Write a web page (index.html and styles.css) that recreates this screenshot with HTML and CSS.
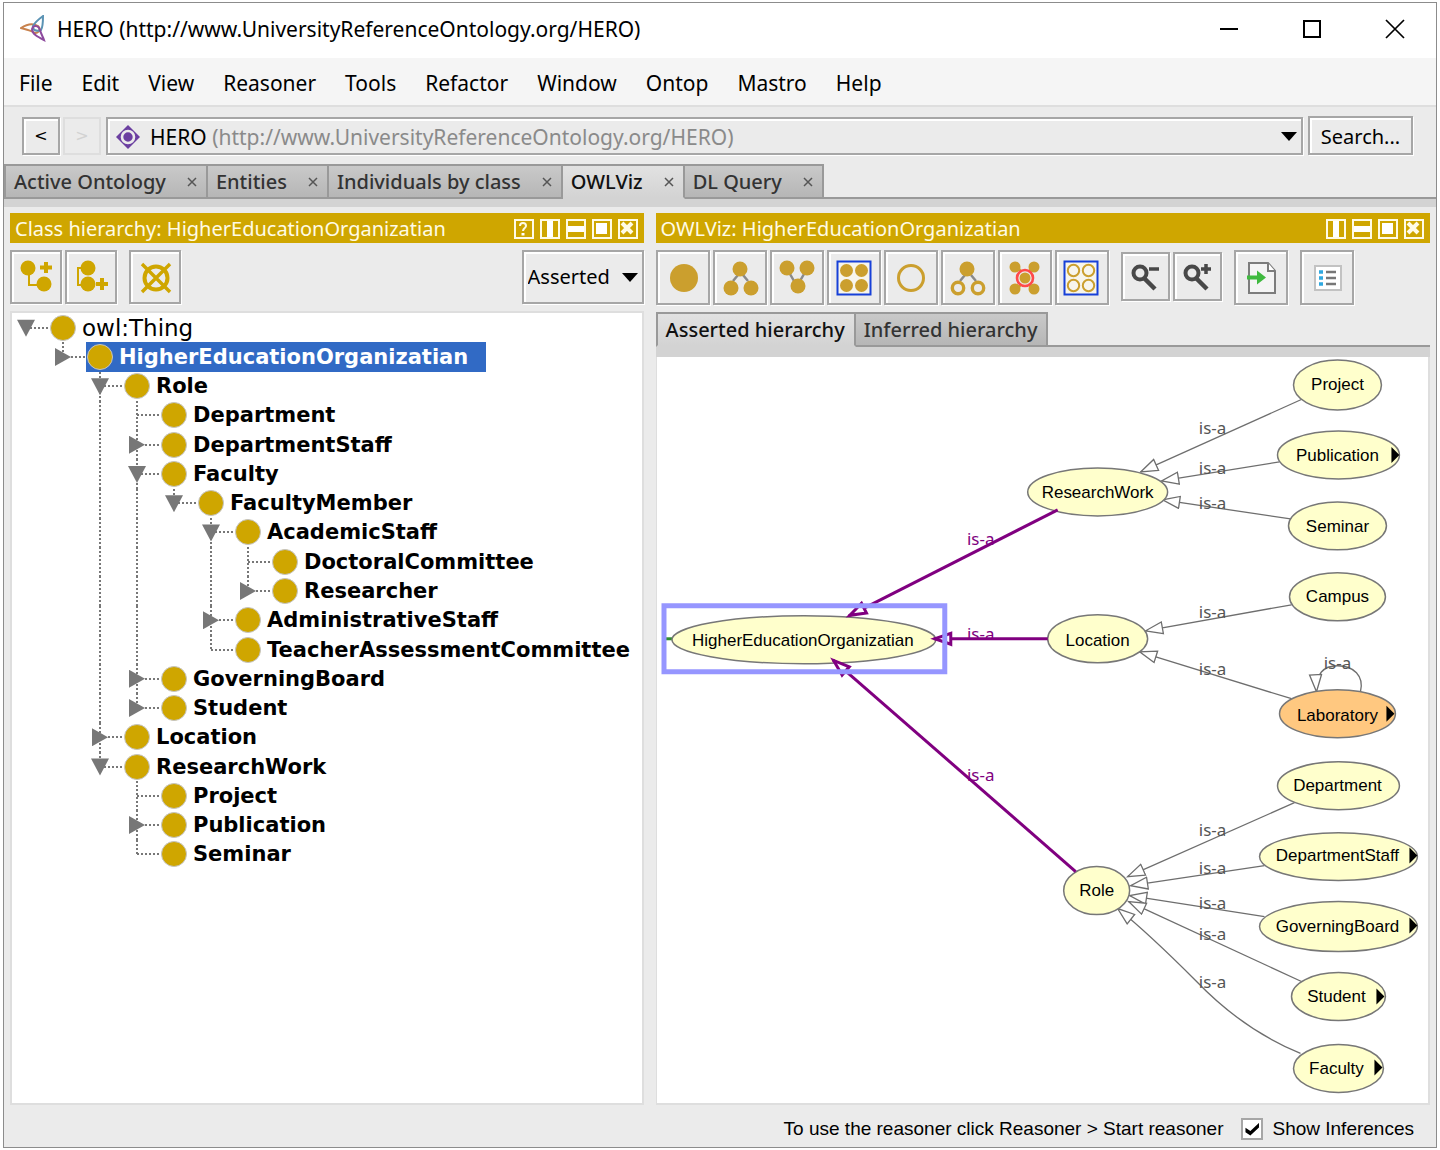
FILE: index.html
```html
<!DOCTYPE html>
<html lang="en">
<head>
<meta charset="utf-8">
<meta name="viewport" content="width=device-width, initial-scale=1">
<title>HERO (http://www.UniversityReferenceOntology.org/HERO)</title>
<link rel="stylesheet" href="styles.css">
</head>
<body>
<div class="window">
  <header class="titlebar">
    <svg class="app-icon" width="26" height="28" viewBox="0 0 26 28" fill="none" stroke-width="2">
      <path d="M1 13C7 9 13 8 18 11C22 15 17 20 13 17C10 15 5 14 1 13Z" stroke="#c8824e"/>
      <path d="M23 1C23 7 23 12 21 15C17 17 12 15 13 11C15 7 19 4 23 1Z" stroke="#5b93b4"/>
      <path d="M24 25C18 22 12 19 12 14C14 9 19 11 20 15C21 19 23 22 24 25Z" stroke="#8d4a9e"/>
    </svg>
    <h1 class="title">HERO (http://www.UniversityReferenceOntology.org/HERO)</h1>
    <div class="window-controls">
      <button type="button" aria-label="Minimize"><svg width="20" height="20" viewBox="0 0 20 20"><path d="M1 10H19" stroke="#000" stroke-width="2"/></svg></button>
      <button type="button" aria-label="Maximize"><svg width="20" height="20" viewBox="0 0 20 20"><path d="M2 2H18V18H2Z" fill="none" stroke="#000" stroke-width="2"/></svg></button>
      <button type="button" aria-label="Close"><svg width="20" height="20" viewBox="0 0 20 20"><path d="M1 1L19 19M19 1L1 19" stroke="#000" stroke-width="1.7"/></svg></button>
    </div>
  </header>

  <nav class="menubar" aria-label="Main menu">
    <button type="button">File</button>
    <button type="button">Edit</button>
    <button type="button">View</button>
    <button type="button">Reasoner</button>
    <button type="button">Tools</button>
    <button type="button">Refactor</button>
    <button type="button">Window</button>
    <button type="button">Ontop</button>
    <button type="button">Mastro</button>
    <button type="button">Help</button>
  </nav>

  <div class="locationbar">
    <button type="button" class="bevel nav-button" aria-label="Back">&lt;</button>
    <button type="button" class="nav-button nav-off" aria-label="Forward" disabled>&gt;</button>
    <button type="button" class="bevel ontology-picker" aria-haspopup="listbox">
      <svg width="26" height="26" viewBox="0 0 26 26"><path d="M13 1L25 13L13 25L1 13Z" fill="#6b3fa0"/><circle cx="13" cy="13" r="6" fill="none" stroke="#ebebeb" stroke-width="2.600"/></svg>
      <span>HERO <span class="iri">(http://www.UniversityReferenceOntology.org/HERO)</span></span>
      <svg class="caret" width="16" height="9" viewBox="0 0 16 9"><path d="M0 0H16L8 9Z"/></svg>
    </button>
    <button type="button" class="bevel search-button">Search...</button>
  </div>

  <div class="tabs main-tabs" role="tablist">
    <div class="tab"><button type="button" role="tab" aria-selected="false">Active Ontology</button><button type="button" class="tab-close" aria-label="Close Active Ontology"><svg width="10" height="10" viewBox="0 0 10 10"><path d="M1 1L9 9M9 1L1 9"/></svg></button></div>
    <div class="tab"><button type="button" role="tab" aria-selected="false">Entities</button><button type="button" class="tab-close" aria-label="Close Entities"><svg width="10" height="10" viewBox="0 0 10 10"><path d="M1 1L9 9M9 1L1 9"/></svg></button></div>
    <div class="tab"><button type="button" role="tab" aria-selected="false">Individuals by class</button><button type="button" class="tab-close" aria-label="Close Individuals by class"><svg width="10" height="10" viewBox="0 0 10 10"><path d="M1 1L9 9M9 1L1 9"/></svg></button></div>
    <div class="tab active"><button type="button" role="tab" aria-selected="true">OWLViz</button><button type="button" class="tab-close" aria-label="Close OWLViz"><svg width="10" height="10" viewBox="0 0 10 10"><path d="M1 1L9 9M9 1L1 9"/></svg></button></div>
    <div class="tab"><button type="button" role="tab" aria-selected="false">DL Query</button><button type="button" class="tab-close" aria-label="Close DL Query"><svg width="10" height="10" viewBox="0 0 10 10"><path d="M1 1L9 9M9 1L1 9"/></svg></button></div>
  </div>

  <main class="panels">
    <section class="panel">
      <header class="panel-header">
        <h2>Class hierarchy: HigherEducationOrganizatian</h2>
        <div class="panel-controls">
          <button type="button" aria-label="Help"><svg width="20" height="20" viewBox="0 0 20 20"><path d="M1 1H19V19H1Z"/><path d="M6 7C6 3 12 3 12 7C12 9 9 9 9 12" stroke-width="3"/><path d="M7.500 14H10.500V16.500H7.500Z" class="solid"/></svg></button>
          <button type="button" aria-label="Split vertically"><svg width="20" height="20" viewBox="0 0 20 20"><path d="M1 1H19V19H1Z"/><path d="M7 2H13V18H7Z" class="solid"/></svg></button>
          <button type="button" aria-label="Split horizontally"><svg width="20" height="20" viewBox="0 0 20 20"><path d="M1 1H19V19H1Z"/><path d="M2 7H18V13H2Z" class="solid"/></svg></button>
          <button type="button" aria-label="Float"><svg width="20" height="20" viewBox="0 0 20 20"><path d="M1 1H19V19H1Z"/><path d="M4 4H15V15H4Z" class="solid"/></svg></button>
          <button type="button" aria-label="Close panel"><svg width="20" height="20" viewBox="0 0 20 20"><path d="M1 1H19V19H1Z"/><path class="cross" d="M4 4L14 14M14 4L4 14"/></svg></button>
        </div>
      </header>
      <div class="toolbar">
        <button type="button" class="bevel tool" aria-label="Add subclass"><svg width="40" height="40" viewBox="1 1 40 40"><path d="M14 16V29H26" fill="none" stroke="#cfa600" stroke-width="2"/><circle cx="13" cy="12" r="7.500" fill="#cfa600"/><circle cx="29" cy="28" r="7.500" fill="#cfa600"/><path d="M31 6V17M25 11.500H37" stroke="#cfa600" stroke-width="4"/></svg></button>
        <button type="button" class="bevel tool" aria-label="Add sibling class"><svg width="40" height="40" viewBox="1 1 40 40"><path d="M14 12H8V29H14" fill="none" stroke="#cfa600" stroke-width="2"/><circle cx="18" cy="12" r="7.500" fill="#cfa600"/><circle cx="18" cy="28" r="7.500" fill="#cfa600"/><path d="M32 22V34M26 28H38" stroke="#cfa600" stroke-width="4"/></svg></button>
        <button type="button" class="bevel tool group-start" aria-label="Delete class"><svg width="40" height="40" viewBox="0 0 40 40" fill="none" stroke="#cfa600" stroke-width="4"><circle cx="21" cy="21" r="11.500"/><path d="M7 7L35 35M35 7L7 35" stroke-width="3.400"/></svg></button>
        <span class="view-picker">
          <select class="bevel" aria-label="Hierarchy view"><option>Asserted</option><option>Inferred</option></select>
          <svg class="caret" width="16" height="9" viewBox="0 0 16 9"><path d="M0 0H16L8 9Z"/></svg>
        </span>
      </div>
      <div class="tree-view">
        <ul class="tree" role="tree">
          <li role="treeitem"><i class="stub"><button type="button" class="toggle open" aria-label="Collapse"></button></i><span class="entry plain"><b class="dot"></b>owl:Thing</span></li>
          <li role="treeitem" aria-selected="true"><i></i><i class="end"><button type="button" class="toggle" aria-label="Expand"></button></i><span class="entry selected"><b class="dot"></b>HigherEducationOrganizatian</span></li>
          <li role="treeitem"><i></i><i></i><i class="tee"><button type="button" class="toggle open" aria-label="Collapse"></button></i><span class="entry"><b class="dot"></b>Role</span></li>
          <li role="treeitem"><i></i><i></i><i class="line"></i><i class="tee"></i><span class="entry"><b class="dot"></b>Department</span></li>
          <li role="treeitem"><i></i><i></i><i class="line"></i><i class="tee"><button type="button" class="toggle" aria-label="Expand"></button></i><span class="entry"><b class="dot"></b>DepartmentStaff</span></li>
          <li role="treeitem"><i></i><i></i><i class="line"></i><i class="tee"><button type="button" class="toggle open" aria-label="Collapse"></button></i><span class="entry"><b class="dot"></b>Faculty</span></li>
          <li role="treeitem"><i></i><i></i><i class="line"></i><i class="line"></i><i class="end"><button type="button" class="toggle open" aria-label="Collapse"></button></i><span class="entry"><b class="dot"></b>FacultyMember</span></li>
          <li role="treeitem"><i></i><i></i><i class="line"></i><i class="line"></i><i></i><i class="tee"><button type="button" class="toggle open" aria-label="Collapse"></button></i><span class="entry"><b class="dot"></b>AcademicStaff</span></li>
          <li role="treeitem"><i></i><i></i><i class="line"></i><i class="line"></i><i></i><i class="line"></i><i class="tee"></i><span class="entry"><b class="dot"></b>DoctoralCommittee</span></li>
          <li role="treeitem"><i></i><i></i><i class="line"></i><i class="line"></i><i></i><i class="line"></i><i class="end"><button type="button" class="toggle" aria-label="Expand"></button></i><span class="entry"><b class="dot"></b>Researcher</span></li>
          <li role="treeitem"><i></i><i></i><i class="line"></i><i class="line"></i><i></i><i class="tee"><button type="button" class="toggle" aria-label="Expand"></button></i><span class="entry"><b class="dot"></b>AdministrativeStaff</span></li>
          <li role="treeitem"><i></i><i></i><i class="line"></i><i class="line"></i><i></i><i class="end"></i><span class="entry"><b class="dot"></b>TeacherAssessmentCommittee</span></li>
          <li role="treeitem"><i></i><i></i><i class="line"></i><i class="tee"><button type="button" class="toggle" aria-label="Expand"></button></i><span class="entry"><b class="dot"></b>GoverningBoard</span></li>
          <li role="treeitem"><i></i><i></i><i class="line"></i><i class="end"><button type="button" class="toggle" aria-label="Expand"></button></i><span class="entry"><b class="dot"></b>Student</span></li>
          <li role="treeitem"><i></i><i></i><i class="tee"><button type="button" class="toggle" aria-label="Expand"></button></i><span class="entry"><b class="dot"></b>Location</span></li>
          <li role="treeitem"><i></i><i></i><i class="end"><button type="button" class="toggle open" aria-label="Collapse"></button></i><span class="entry"><b class="dot"></b>ResearchWork</span></li>
          <li role="treeitem"><i></i><i></i><i></i><i class="tee"></i><span class="entry"><b class="dot"></b>Project</span></li>
          <li role="treeitem"><i></i><i></i><i></i><i class="tee"><button type="button" class="toggle" aria-label="Expand"></button></i><span class="entry"><b class="dot"></b>Publication</span></li>
          <li role="treeitem"><i></i><i></i><i></i><i class="end"></i><span class="entry"><b class="dot"></b>Seminar</span></li>
        </ul>
      </div>
    </section>

    <section class="panel">
      <header class="panel-header">
        <h2>OWLViz: HigherEducationOrganizatian</h2>
        <div class="panel-controls">
          <button type="button" aria-label="Split vertically"><svg width="20" height="20" viewBox="0 0 20 20"><path d="M1 1H19V19H1Z"/><path d="M7 2H13V18H7Z" class="solid"/></svg></button>
          <button type="button" aria-label="Split horizontally"><svg width="20" height="20" viewBox="0 0 20 20"><path d="M1 1H19V19H1Z"/><path d="M2 7H18V13H2Z" class="solid"/></svg></button>
          <button type="button" aria-label="Float"><svg width="20" height="20" viewBox="0 0 20 20"><path d="M1 1H19V19H1Z"/><path d="M4 4H15V15H4Z" class="solid"/></svg></button>
          <button type="button" aria-label="Close panel"><svg width="20" height="20" viewBox="0 0 20 20"><path d="M1 1H19V19H1Z"/><path class="cross" d="M4 4L14 14M14 4L4 14"/></svg></button>
        </div>
      </header>
      <div class="toolbar viz-toolbar">
        <button type="button" class="bevel tool" aria-label="Show class"><svg width="40" height="40" viewBox="0 0 40 40"><circle cx="21" cy="20" r="14" fill="#cb9f2e"/></svg></button>
        <button type="button" class="bevel tool" aria-label="Show subclasses"><svg width="40" height="40" viewBox="0 0 40 40"><path d="M18 17L13 23M23 17L28 23" stroke="#8a8a8a" stroke-width="2.500"/><g fill="#cb9f2e"><circle cx="20" cy="11" r="7.500"/><circle cx="11" cy="30" r="7.500"/><circle cx="31" cy="30" r="7.500"/></g></svg></button>
        <button type="button" class="bevel tool" aria-label="Show superclasses"><svg width="40" height="40" viewBox="0 0 40 40"><path d="M13 16L17 23M27 16L23 23" stroke="#8a8a8a" stroke-width="2.500"/><g fill="#cb9f2e"><circle cx="10" cy="10" r="7.500"/><circle cx="30" cy="10" r="7.500"/><circle cx="21" cy="28" r="7.500"/></g></svg></button>
        <button type="button" class="bevel tool" aria-label="Show all classes"><svg width="40" height="40" viewBox="0 0 40 40"><path d="M3.500 3.500H36.500V36.500H3.500Z" fill="#f7f5ec" stroke="#1740d8" stroke-width="2"/><g fill="#cb9f2e"><circle cx="12.500" cy="12.500" r="6.500"/><circle cx="27.500" cy="12.500" r="6.500"/><circle cx="12.500" cy="27.500" r="6.500"/><circle cx="27.500" cy="27.500" r="6.500"/></g></svg></button>
        <button type="button" class="bevel tool" aria-label="Hide class"><svg width="40" height="40" viewBox="0 0 40 40"><circle cx="20" cy="20" r="12.500" fill="none" stroke="#cb9f2e" stroke-width="3"/></svg></button>
        <button type="button" class="bevel tool" aria-label="Hide subclasses"><svg width="40" height="40" viewBox="0 0 40 40"><path d="M17 17L12 23M23 17L28 23" stroke="#8a8a8a" stroke-width="2.500"/><circle cx="19" cy="11" r="7.500" fill="#cb9f2e"/><g fill="none" stroke="#cb9f2e" stroke-width="3.400"><circle cx="10" cy="30" r="5.700"/><circle cx="30" cy="30" r="5.700"/></g></svg></button>
        <button type="button" class="bevel tool" aria-label="Hide classes past radius"><svg width="40" height="40" viewBox="0 0 40 40"><g fill="#cb9f2e"><circle cx="10" cy="9" r="5.500"/><circle cx="29" cy="9" r="5.500"/><circle cx="10" cy="31" r="5.500"/><circle cx="29" cy="31" r="5.500"/><path d="M12 8L28 32M28 8L12 32" stroke="#cb9f2e" stroke-width="2.500"/></g><circle cx="20" cy="20" r="8" fill="#ebebeb" stroke="#ff4a4a" stroke-width="2.600"/><circle cx="20" cy="20" r="5.500" fill="#cb9f2e"/></svg></button>
        <button type="button" class="bevel tool" aria-label="Hide all classes"><svg width="40" height="40" viewBox="1 0 40 40"><path d="M3.500 3.500H36.500V36.500H3.500Z" fill="#f7f5ec" stroke="#1740d8" stroke-width="2"/><g fill="none" stroke="#cb9f2e" stroke-width="2"><circle cx="12.500" cy="12.500" r="5.700"/><circle cx="27.500" cy="12.500" r="5.700"/><circle cx="12.500" cy="27.500" r="5.700"/><circle cx="27.500" cy="27.500" r="5.700"/></g></svg></button>
        <button type="button" class="bevel tool small group-start" aria-label="Zoom out"><svg width="34" height="34" viewBox="0 1 34 34" fill="none" stroke="#484848"><circle cx="12" cy="14" r="6.500" stroke-width="4"/><path d="M16 19L27 30" stroke-width="4.500"/><path d="M21 10H31" stroke-width="3.500"/></svg></button>
        <button type="button" class="bevel tool small" aria-label="Zoom in"><svg width="34" height="34" viewBox="0 1 34 34" fill="none" stroke="#484848"><circle cx="12" cy="14" r="6.500" stroke-width="4"/><path d="M16 19L27 30" stroke-width="4.500"/><path d="M21 10H31M26 5V15" stroke-width="3.500"/></svg></button>
        <button type="button" class="bevel tool group-start" aria-label="Export image"><svg width="40" height="40" viewBox="0 0 40 40"><path d="M8 5H27L34 13V35H8Z" fill="#f4f4f4" stroke="#7c7c7c" stroke-width="2"/><path d="M27 5V13H34" fill="#fff" stroke="#7c7c7c" stroke-width="2"/><path d="M6 17.500H16V12.500L25 19.500L16 26.500V21.500H6Z" fill="#3fb93f"/></svg></button>
        <button type="button" class="bevel tool group-start" aria-label="Options"><svg width="40" height="40" viewBox="0 0 40 40"><path d="M8 8H34V32H8Z" fill="#fff" stroke="#c2c2c2" stroke-width="2"/><path d="M12 14H16M12 20H16M12 26H16" stroke="#2fa8e0" stroke-width="3.500"/><path d="M19 14H29M19 20H29M19 26H29" stroke="#777" stroke-width="2.500"/></svg></button>
      </div>
      <div class="tabs viz-tabs" role="tablist">
        <div class="tab active"><button type="button" role="tab" aria-selected="true">Asserted hierarchy</button></div>
        <div class="tab"><button type="button" role="tab" aria-selected="false">Inferred hierarchy</button></div>
      </div>
      <div class="graph-view">
        <svg class="graph" viewBox="657 357 772 746" role="img" aria-label="Asserted class graph">
          <defs>
            <marker id="arrow" markerUnits="userSpaceOnUse" markerWidth="22" markerHeight="16" refX="18" refY="7" orient="auto"><path d="M1 1L18 7L1 13Z" fill="#fff" stroke="#6e6e6e" stroke-width="1.300"/></marker>
            <marker id="arrow-hot" markerUnits="userSpaceOnUse" markerWidth="24" markerHeight="20" refX="20" refY="8" orient="auto"><path d="M3 2.500L19 8L3 13.500Z" fill="#fff" stroke="#800080" stroke-width="3"/></marker>
          </defs>
          <path d="M664 639H673" stroke="#2e8b2e" stroke-width="3"/>
          <g class="edge">
            <path d="M1303 399L1141 472"/>
            <path d="M1280 462L1162 481"/>
            <path d="M1291 519L1163 500"/>
            <path d="M1292 605L1146 631"/>
            <path d="M1292 699L1140 652"/>
            <path d="M1361 692C1365 676 1354 666 1338 666C1324 666 1316 674 1317 692"/>
            <path d="M1295 803L1128 877"/>
            <path d="M1265 866L1131 886"/>
            <path d="M1265 917L1130 896"/>
            <path d="M1302 982L1129 902"/>
            <path d="M1301 1054C1262 1038 1226 1012 1197 982C1165 950 1138 925 1118 909"/>
          </g>
          <g class="node">
            <ellipse cx="804" cy="640" rx="132" ry="24"/>
            <ellipse cx="1098" cy="492" rx="70" ry="24"/>
            <ellipse cx="1098" cy="639" rx="50" ry="24"/>
            <ellipse cx="1097" cy="891" rx="33" ry="24"/>
            <ellipse cx="1338" cy="385" rx="44" ry="25"/>
            <ellipse cx="1339" cy="455" rx="61" ry="24"/>
            <ellipse cx="1338" cy="526" rx="49" ry="24"/>
            <ellipse cx="1338" cy="597" rx="48" ry="24"/>
            <ellipse cx="1338" cy="714" rx="58" ry="24" fill="#ffc880"/>
            <ellipse cx="1339" cy="786" rx="61" ry="24"/>
            <ellipse cx="1339" cy="857" rx="79" ry="24"/>
            <ellipse cx="1339" cy="927" rx="79" ry="25"/>
            <ellipse cx="1339" cy="997" rx="47" ry="24"/>
            <ellipse cx="1339" cy="1069" rx="45" ry="24"/>
          </g>
          <g class="more">
            <path d="M1392 447V463L1400 455Z"/>
            <path d="M1387 706V722L1395 714Z"/>
            <path d="M1410 848V864L1418 856Z"/>
            <path d="M1410 918V934L1418 926Z"/>
            <path d="M1377 989V1005L1385 997Z"/>
            <path d="M1375 1060V1076L1383 1068Z"/>
          </g>
          <g class="edge hot">
            <path d="M1058 510L849 616"/>
            <path d="M1048 639H934"/>
            <path d="M1076 872L833 660"/>
          </g>
          <path d="M664 606H945V672H664Z" fill="none" stroke="#9696ff" stroke-width="5"/>
          <g class="edge-label">
            <text x="1213" y="434">is-a</text>
            <text x="1213" y="474">is-a</text>
            <text x="1213" y="509">is-a</text>
            <text x="1213" y="618">is-a</text>
            <text x="1213" y="675">is-a</text>
            <text x="1338" y="669">is-a</text>
            <text x="1213" y="836">is-a</text>
            <text x="1213" y="874">is-a</text>
            <text x="1213" y="909">is-a</text>
            <text x="1213" y="940">is-a</text>
            <text x="1213" y="989">is-a</text>
          </g>
          <g class="edge-label hot">
            <text x="981" y="545">is-a</text>
            <text x="981" y="640">is-a</text>
            <text x="981" y="781">is-a</text>
          </g>
          <g class="node-label">
            <text x="803" y="646">HigherEducationOrganizatian</text>
            <text x="1098" y="498">ResearchWork</text>
            <text x="1098" y="646">Location</text>
            <text x="1097" y="896">Role</text>
            <text x="1338" y="390">Project</text>
            <text x="1338" y="461">Publication</text>
            <text x="1338" y="532">Seminar</text>
            <text x="1338" y="602">Campus</text>
            <text x="1338" y="721">Laboratory</text>
            <text x="1338" y="791">Department</text>
            <text x="1338" y="861">DepartmentStaff</text>
            <text x="1338" y="932">GoverningBoard</text>
            <text x="1337" y="1003">Student</text>
            <text x="1337" y="1075">Faculty</text>
          </g>
        </svg>
      </div>
    </section>
  </main>

  <footer class="statusbar">
    <span>To use the reasoner click Reasoner &gt; Start reasoner</span>
    <input type="checkbox" id="show-inferences" checked>
    <label for="show-inferences">Show Inferences</label>
  </footer>
</div>
</body>
</html>
```
FILE: styles.css
```css
* { box-sizing: border-box; }

body {
  margin: 0;
  padding: 2px 3px;
  background: #fff;
  color: #000;
  font-family: "Noto Sans", "Open Sans", sans-serif;
  font-size: 21px;
  line-height: 28px;
}

button, select, input {
  font: inherit;
  color: inherit;
  margin: 0;
}

button {
  padding: 0;
  border: 0;
  background: none;
}

h1, h2 {
  margin: 0;
  font-size: 21px;
  font-weight: 400;
}

h2 { font-size: 20px; }

svg { display: block; }

.window {
  display: flex;
  flex-direction: column;
  min-height: calc(100vh - 4px);
  border: 1px solid #8c8c8c;
  background: #ebebeb;
}

/* Title bar */
.titlebar {
  display: flex;
  align-items: center;
  height: 55px;
  padding: 0 0 3px 16px;
  background: #fff;
}

.title { margin-left: 11px; }

.window-controls {
  display: flex;
  margin-left: auto;
}

.window-controls button {
  display: grid;
  place-items: center;
  width: 83px;
  height: 52px;
}

/* Menu bar */
.menubar {
  display: flex;
  align-items: center;
  gap: 29px;
  height: 49px;
  padding: 2px 15px 0;
  border-bottom: 2px solid #dedede;
  background: #f5f5f5;
}

/* Raised grey frame shared by buttons and pickers */
.bevel {
  border: 2px solid #a6a6a6;
  border-radius: 0;
  background: #ebebeb;
  box-shadow: inset 2px 2px 0 #fff, 1px 1px 0 #fff;
}

.locationbar {
  display: flex;
  align-items: center;
  height: 57px;
  padding: 0 23px 0 18px;
}

.nav-button {
  width: 38px;
  height: 38px;
  font-family: "DejaVu Sans", sans-serif;
  font-size: 16px;
}

.nav-off {
  margin-left: 3px;
  border: 2px solid #dedede;
  color: #d2d2d2;
}

.ontology-picker {
  display: flex;
  flex: 1;
  align-items: center;
  gap: 9px;
  height: 38px;
  margin: 0 5px;
  padding: 2px 4px 0 7px;
}

.iri { color: #8a8a8a; }

.caret { margin-left: auto; }

.search-button {
  width: 105px;
  height: 39px;
  padding-top: 2px;
  font-size: 20px;
}

/* Tab strips */
.tabs {
  display: flex;
  height: 43px;
  border-bottom: 8px solid #d3d3d3;
  background: linear-gradient(#999, #999) 0 100% / 100% 2px no-repeat;
  font-size: 20px;
}

.tab {
  display: flex;
  align-items: center;
  gap: 21px;
  height: 35px;
  padding: 0 9px 0 8px;
  border: 2px solid #999;
  border-left-width: 0;
  background: linear-gradient(#c9c9c9, #b6b6b6);
  color: #333;
  font-weight: 500;
}

.tab:first-child { border-left-width: 2px; }

.tab.active {
  border-bottom-color: #d3d3d3;
  background: linear-gradient(#e2e2e2, #d3d3d3);
  color: #111;
}

.tab-close path {
  fill: none;
  stroke: #555;
  stroke-width: 1.5;
}

/* Work area */
.panels {
  display: grid;
  flex: 1;
  grid-template-columns: minmax(0, 9fr) minmax(0, 11fr);
  gap: 12px;
  padding: 6px 6px 0;
}

.panel {
  display: flex;
  flex-direction: column;
}

.panel-header {
  display: flex;
  align-items: center;
  justify-content: space-between;
  height: 30px;
  padding: 1px 6px 0 5px;
  background: #cfa600;
  color: #fffbe6;
}

.panel-controls {
  display: flex;
  gap: 6px;
}

.panel-controls path {
  fill: none;
  stroke: #fffbe6;
  stroke-width: 2;
}

.panel-controls .solid {
  fill: #fff;
  stroke: none;
}

.panel-controls .cross { stroke-width: 4; }

.toolbar {
  display: flex;
  gap: 3px;
  margin: 7px 0;
}

.tool {
  display: grid;
  place-items: center;
  width: 52px;
  height: 54px;
}

.viz-toolbar .tool {
  width: 54px;
  height: 55px;
}

.viz-toolbar .small {
  width: 49px;
  height: 49px;
  margin-top: 2px;
}

.group-start { margin-left: 9px; }

.view-picker {
  display: grid;
  align-items: center;
  width: 122px;
  margin-left: auto;
}

.view-picker select,
.view-picker .caret {
  grid-area: 1 / 1;
}

.view-picker select {
  width: 100%;
  height: 54px;
  padding: 0 4px;
  font-size: 20px;
  appearance: none;
}

.view-picker .caret {
  margin-right: 6px;
  pointer-events: none;
}

/* Class tree */
.tree-view {
  flex: 1;
  border: 2px solid #dedede;
  background: #fff;
}

.tree {
  display: grid;
  grid-auto-rows: 1fr;
  height: 556px;
  margin: 0;
  padding: 0;
  list-style: none;
  font-family: "DejaVu Sans", Verdana, sans-serif;
  font-size: 21px;
  font-weight: 700;
}

.tree li { display: flex; }

.tree i {
  display: flex;
  flex: none;
  align-items: center;
  width: 37px;
  padding-left: 5px;
  background-repeat: no-repeat;
}

.tree .line,
.tree .tee,
.tree .end,
.tree .stub {
  --dots-v: repeating-linear-gradient(#777 0 2px, transparent 2px 4px);
  --dots-h: repeating-linear-gradient(90deg, #777 0 2px, transparent 2px 4px);
}

.tree .line { background: var(--dots-v) 13px 0 / 2px 100% no-repeat; }
.tree .stub { background: var(--dots-h) 14px 50% / 22px 2px no-repeat; }
.tree .tee { background: var(--dots-v) 13px 0 / 2px 100% no-repeat, var(--dots-h) 14px 50% / 22px 2px no-repeat; }
.tree .end { background: var(--dots-v) 13px 0 / 2px 50% no-repeat, var(--dots-h) 14px 50% / 22px 2px no-repeat; }

.toggle {
  width: 18px;
  height: 18px;
  background: #777;
  clip-path: polygon(1px 0, 17px 50%, 1px 100%);
}

.toggle.open { clip-path: polygon(0 1px, 100% 1px, 50% 100%); }

.entry {
  display: flex;
  align-items: center;
  gap: 6px;
  padding: 0 18px 0 1px;
}

.plain {
  font-size: 23px;
  font-weight: 400;
}

.selected {
  background: #316ac5;
  color: #fff;
}

.dot {
  width: 26px;
  height: 26px;
  border: 1px solid #c4c4c4;
  border-radius: 50%;
  background: #cfa600;
}

/* Graph */
.viz-tabs {
  height: 45px;
  border-bottom-width: 10px;
}

.graph-view {
  flex: 1;
  border: solid #dedede;
  border-width: 0 2px 2px 1px;
  background: #fff;
}

.graph {
  width: 100%;
  height: auto;
}

.edge path {
  fill: none;
  stroke: #6e6e6e;
  stroke-width: 1.3;
  marker-end: url(#arrow);
}

.edge.hot path {
  stroke: #800080;
  stroke-width: 3;
  marker-end: url(#arrow-hot);
}

.node {
  fill: #ffffcc;
  stroke: #777;
  stroke-width: 1.5;
}

.edge-label,
.node-label { text-anchor: middle; }

.edge-label {
  fill: #555;
  font-size: 17px;
}

.edge-label.hot { fill: #800080; }

.node-label {
  fill: #000;
  font-family: "Liberation Sans", Arial, sans-serif;
  font-size: 17px;
}

/* Status bar */
.statusbar {
  display: flex;
  align-items: center;
  justify-content: flex-end;
  height: 42px;
  padding: 6px 22px 0;
  font-family: "Liberation Sans", Arial, sans-serif;
  font-size: 19px;
}

.statusbar input {
  display: grid;
  place-items: center;
  width: 22px;
  height: 22px;
  margin: 0 9px 0 18px;
  border: 2px solid #a6a6a6;
  background: #fff;
  appearance: none;
}

.statusbar input:checked::before {
  content: "";
  width: 14px;
  height: 13px;
  background: #000;
  clip-path: polygon(0 40%, 35% 65%, 100% 0, 100% 35%, 35% 100%, 0 75%);
}
```
